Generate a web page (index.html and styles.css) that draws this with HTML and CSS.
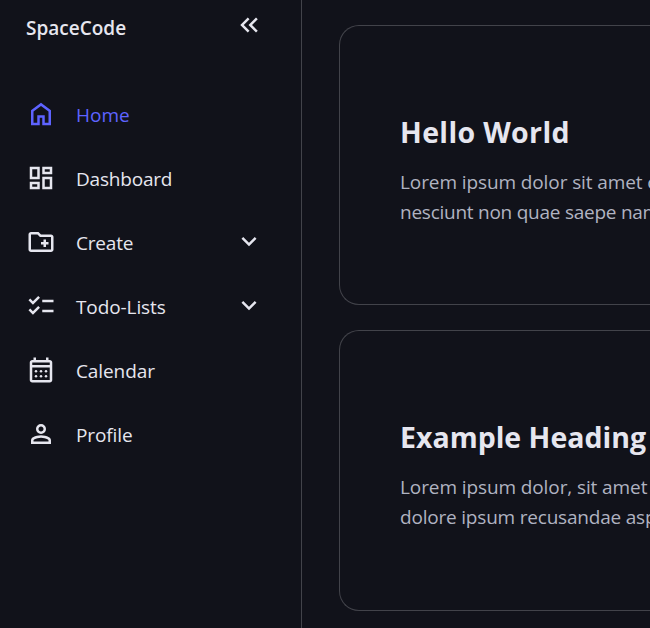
FILE: index.html
```html
<!DOCTYPE html>
<html lang="en">
<head>
<meta charset="utf-8">
<title>SpaceCode</title>
<link rel="stylesheet" href="styles.css">
</head>
<body>
<nav class="sidebar">
  <div class="brand-row">
    <span class="logo">SpaceCode</span>
    <svg class="icon" viewBox="0 -960 960 960"><path d="M440-240 200-480l240-240 56 56-183 184 183 184-56 56Zm264 0L464-480l240-240 56 56-183 184 183 184-56 56Z"/></svg>
  </div>
  <a class="item active">
    <svg class="icon" viewBox="0 -960 960 960"><path d="M240-200h120v-240h240v240h120v-360L480-740 240-560v360Zm-80 80v-480l320-240 320 240v480H520v-240h-80v240H160Z"/></svg>
    <span class="label">Home</span>
  </a>
  <a class="item">
    <svg class="icon" viewBox="0 -960 960 960"><path d="M520-600v-240h320v240H520ZM120-440v-400h320v400H120Zm400 320v-400h320v400H520Zm-400 0v-240h320v240H120Zm80-400h160v-240H200v240Zm400 320h160v-240H600v240Zm0-480h160v-80H600v80ZM200-200h160v-80H200v80Z"/></svg>
    <span class="label tight">Dashboard</span>
  </a>
  <a class="item">
    <svg class="icon" viewBox="0 -960 960 960"><path d="M560-320h80v-80h80v-80h-80v-80h-80v80h-80v80h80v80ZM160-160q-33 0-56.500-23.500T80-240v-480q0-33 23.500-56.500T160-800h240l80 80h320q33 0 56.500 23.500T880-640v400q0 33-23.500 56.500T800-160H160Zm0-80h640v-400H447l-80-80H160v480Z"/></svg>
    <span class="label tight">Create</span>
    <svg class="icon" viewBox="0 -960 960 960"><path d="M480-344 240-584l56-56 184 184 184-184 56 56-240 240Z"/></svg>
  </a>
  <a class="item">
    <svg class="icon" viewBox="0 -960 960 960"><path d="M222-200 80-342l56-56 85 85 170-170 56 57-225 226Zm0-320L80-662l56-56 85 85 170-170 56 57-225 226Zm298 240v-80h360v80H520Zm0-320v-80h360v80H520Z"/></svg>
    <span class="label snug">Todo-Lists</span>
    <svg class="icon" viewBox="0 -960 960 960"><path d="M480-344 240-584l56-56 184 184 184-184 56 56-240 240Z"/></svg>
  </a>
  <a class="item">
    <svg class="icon" viewBox="0 -960 960 960"><path d="M200-80q-33 0-56.500-23.500T120-160v-560q0-33 23.500-56.500T200-800h40v-80h80v80h320v-80h80v80h40q33 0 56.500 23.500T840-720v560q0 33-23.500 56.500T760-80H200Zm0-80h560v-400H200v400Zm0-480h560v-80H200v80Z"/><circle cx="320" cy="-440" r="40"/><circle cx="480" cy="-440" r="40"/><circle cx="640" cy="-440" r="40"/><circle cx="320" cy="-280" r="40"/><circle cx="480" cy="-280" r="40"/><circle cx="640" cy="-280" r="40"/></svg>
    <span class="label snug">Calendar</span>
  </a>
  <a class="item">
    <svg class="icon" viewBox="0 -960 960 960"><path d="M480-480q-66 0-113-47t-47-113q0-66 47-113t113-47q66 0 113 47t47 113q0 66-47 113t-113 47ZM160-160v-112q0-34 17.500-62.500T224-378q62-31 126-46.500T480-440q66 0 130 15.500T736-378q29 15 46.500 43.500T800-272v112H160Zm80-80h480v-32q0-11-5.500-20T700-306q-54-27-109-40.500T480-360q-56 0-111 13.500T260-306q-9 5-14.500 14t-5.500 20v32Zm240-320q33 0 56.500-23.500T560-640q0-33-23.500-56.500T480-720q-33 0-56.500 23.500T400-640q0 33 23.500 56.500T480-560Z"/></svg>
    <span class="label snug">Profile</span>
  </a>
</nav>
<main class="content">
  <section class="card">
    <h2 class="loose">Hello World</h2>
    <p><span class="snug">Lorem ipsum dolor sit amet c</span><br><span class="tighter">nesciunt non quae saepe nam</span></p>
  </section>
  <section class="card second">
    <h2>Example Heading</h2>
    <p><span class="snug">Lorem ipsum dolor, sit amet</span><br><span class="tight">dolore ipsum recusandae asp</span></p>
  </section>
</main>
</body>
</html>
```
FILE: styles.css
```css
* { box-sizing: border-box; margin: 0; padding: 0; }
body {
  display: grid;
  grid-template-columns: 302px 1fr;
  height: 628px;
  overflow: hidden;
  background: #11121a;
  color: #e6e6ef;
  font: 19px/30px "Open Sans", "Noto Sans", sans-serif;
}
.sidebar {
  border-right: 1px solid #42434a;
  padding: 10px 37px 0 26px;
}
.brand-row {
  display: flex;
  justify-content: space-between;
  height: 72px;
}
.logo { font-weight: 600; padding-top: 3px; }
.icon { width: 30px; height: 30px; flex: none; fill: currentColor; }
.item {
  display: flex;
  align-items: center;
  gap: 20px;
  height: 64px;
}
.active { color: #5e63ff; }
.label { flex: 1; padding-top: 2px; }
.content { min-width: 0; overflow: hidden; padding: 25px 0 0 37px; }
.card {
  height: 280px;
  border: 1px solid #42434a;
  border-right: 0;
  border-radius: 20px 0 0 20px;
  padding: 86px 0 0 60px;
  white-space: nowrap;
}
.second { margin-top: 25px; height: 281px; }
.card h2 { font-size: 28.5px; line-height: 40px; font-weight: 700; }
.card p { color: #b0b3c1; margin-top: 15px; }
.loose { letter-spacing: 0.35px; }
.snug { letter-spacing: -0.1px; }
.tight { letter-spacing: -0.2px; }
.tighter { letter-spacing: -0.25px; }
```
